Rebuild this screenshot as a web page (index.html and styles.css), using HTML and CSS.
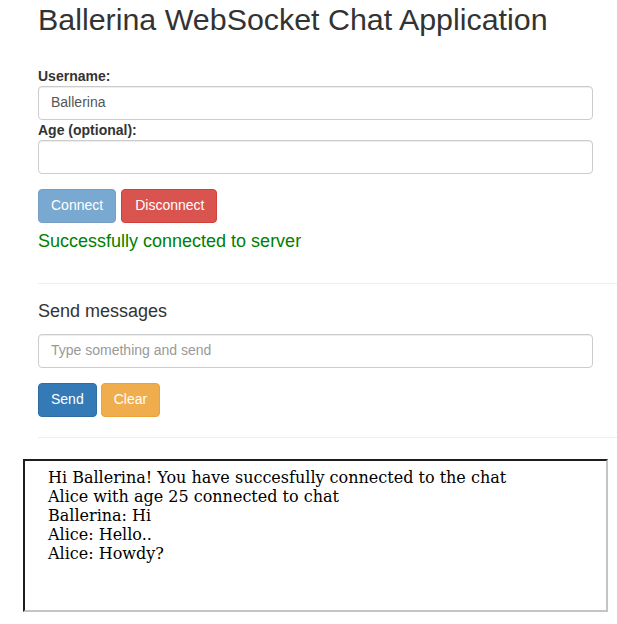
FILE: index.html
```html
<!DOCTYPE html>
<html>
<head>
<meta charset="utf-8">
<title>Ballerina WebSocket Chat Application</title>
<link rel="stylesheet" href="styles.css">
</head>
<body>
<div class="container">
  <div class="panel">
    <h2 class="title">Ballerina WebSocket Chat Application</h2>
    <div class="field">
      <label class="label" for="username">Username:</label>
      <input class="form-control" id="username" type="text" value="Ballerina">
    </div>
    <div class="field">
      <label class="label" for="age">Age (optional):</label>
      <input class="form-control" id="age" type="text">
    </div>
    <div class="btn-row btn-row-wide">
      <button class="btn btn-primary btn-disabled" type="button">Connect</button>
      <button class="btn btn-danger btn-wide" type="button">Disconnect</button>
    </div>
    <div class="status">Successfully connected to server</div>
  </div>
  <hr class="rule rule-top">
  <div class="panel">
    <h4 class="subtitle">Send messages</h4>
    <input class="form-control" type="text" placeholder="Type something and send">
    <div class="btn-row">
      <button class="btn btn-primary" type="button">Send</button>
      <button class="btn btn-warning" type="button">Clear</button>
    </div>
  </div>
  <hr class="rule rule-bottom">
</div>
<div class="chat">
  <div class="msg">Hi Ballerina! You have succesfully connected to the chat</div>
  <div class="msg">Alice with age 25 connected to chat</div>
  <div class="msg">Ballerina: Hi</div>
  <div class="msg">Alice: Hello..</div>
  <div class="msg">Alice: Howdy?</div>
</div>
</body>
</html>
```
FILE: styles.css
```css
* {
  box-sizing: border-box;
}

html, body {
  margin: 0;
  padding: 0;
  background: #fff;
}

body {
  font-family: "Liberation Sans", Arial, Helvetica, sans-serif;
  font-size: 14px;
  line-height: 1.42857143;
  color: #333;
}

.container {
  padding-left: 38px;
}

.panel {
  padding-right: 24px;
}

.title {
  font-size: 30.4px;
  font-weight: 500;
  line-height: 33px;
  margin: 3px 0 30px;
  color: #333;
}

.field {
  display: block;
}

.label {
  display: inline-block;
  font-weight: 700;
  margin: 0;
}

.form-control {
  display: block;
  width: 100%;
  height: 34px;
  padding: 5px 12px 7px;
  font-family: inherit;
  font-size: 14px;
  line-height: 1.42857143;
  color: #555;
  background: #fff;
  border: 1px solid #ccc;
  border-radius: 4px;
  box-shadow: inset 0 1px 1px rgba(0, 0, 0, .075);
  margin: 0;
}

.form-control::placeholder {
  color: #999;
}

.btn-row {
  margin-top: 15px;
  font-size: 0;
  display: flex;
  gap: 4px;
}

.btn-row-wide {
  gap: 5px;
}

.btn {
  display: inline-block;
  height: 34px;
  padding: 5px 12px 7px;
  font-family: inherit;
  font-size: 14px;
  line-height: 1.42857143;
  border: 1px solid transparent;
  border-radius: 4px;
  color: #fff;
  cursor: pointer;
  margin: 0;
}

.btn-wide {
  padding-left: 13px;
}

.btn-primary {
  background: #337ab7;
  border-color: #2e6da4;
}

.btn-disabled {
  opacity: .65;
  cursor: not-allowed;
}

.btn-danger {
  background: #d9534f;
  border-color: #d43f3a;
}

.btn-warning {
  background: #f0ad4e;
  border-color: #eea236;
}

.status {
  margin-top: 6px;
  font-size: 18px;
  line-height: 25.7px;
  color: #008000;
}

.rule {
  border: 0;
  border-top: 1px solid #eee;
  margin: 0;
  height: 0;
}

.rule-top {
  margin-top: 28px;
}

.subtitle {
  font-size: 18px;
  font-weight: 500;
  line-height: 1.1;
  margin: 18px 0 12px;
  color: #333;
}

.rule-bottom {
  margin-top: 20px;
}

.chat {
  margin: 21px 0 0 23px;
  width: 585px;
  height: 153px;
  border-width: 2px;
  border-style: solid;
  border-color: #1e1e1e #c4c4c4 #c4c4c4 #1e1e1e;
  padding: 7px 23px;
  font-family: "DejaVu Serif", serif;
  font-size: 16px;
  line-height: 19px;
  color: #000;
}
```
